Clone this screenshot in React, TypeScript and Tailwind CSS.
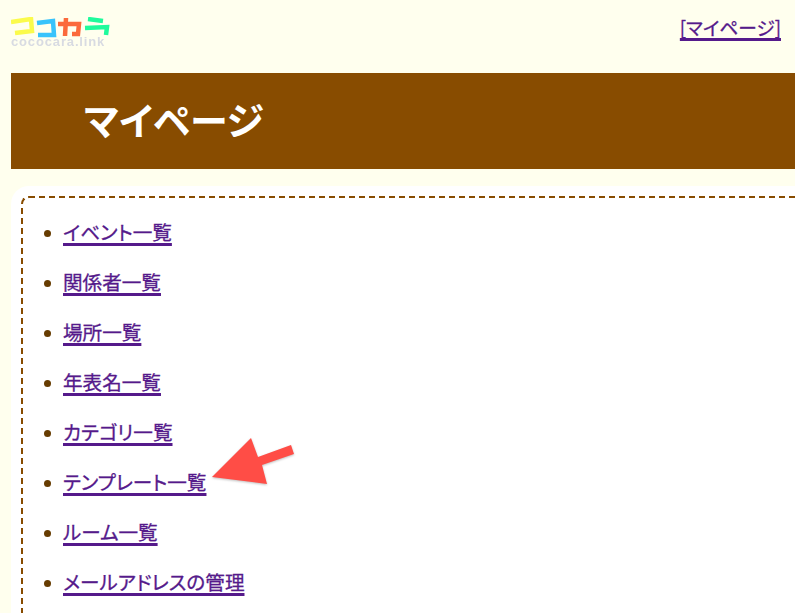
const items = [
  "イベント一覧",
  "関係者一覧",
  "場所一覧",
  "年表名一覧",
  "カテゴリ一覧",
  "テンプレート一覧",
  "ルーム一覧",
  "メールアドレスの管理",
];

function Logo() {
  return (
    <div className="relative h-[30px] w-[100px]">
      <svg width="100" height="21" viewBox="0 0 100 21" className="block blur-[0.5px]" fill="none" strokeWidth="4.5">
        <path d="M0 5 L20 2 L21 14 L4 16" stroke="#fbfb4b" />
        <path d="M26 6 L42 4 L43 18 L27 18" stroke="#38c3fb" />
        <path d="M47 7 L68 7 L67 17 L61 17 M55 1 L54 19" stroke="#fb6a3c" />
        <path d="M77 2 L92 4 M74 11 L96 10 L95 18" stroke="#1ffb9c" />
      </svg>
      <span className="absolute left-0 top-[20px] whitespace-nowrap font-['Liberation_Sans',sans-serif] text-[13px] font-bold leading-[9px] tracking-[0.85px] text-[#d8dbe2] blur-[0.5px]">
        cococara.link
      </span>
    </div>
  );
}

function Arrow() {
  return (
    <svg width="96" height="60" viewBox="0 0 96 60" className="absolute left-[206px] top-[434px] drop-shadow-[0_1px_1px_rgba(0,0,0,0.25)]">
      <path d="M6 43 L45 4 L52 23 L85 11 L88 20 L56 31 L61 50 Z" fill="#ff4d46" />
    </svg>
  );
}

export default function App() {
  return (
    <div className="relative h-[613px] w-[795px] overflow-hidden bg-[#ffffee] pl-[11px] font-['Noto_Sans_CJK_JP','Liberation_Sans',sans-serif] text-[#663c00] [font-feature-settings:'palt']">
      <header className="flex h-[73px] items-start justify-between pr-[14px]">
        <div className="pt-[17px]">
          <Logo />
        </div>
        <a href="#" className="mt-[13px] text-[18.7px] leading-[28px] text-[#551a8b] underline decoration-[2.5px] underline-offset-[3px] [-webkit-text-stroke:0.3px_#551a8b]">
          [マイページ]
        </a>
      </header>
      <h1 className="flex h-[96px] items-center bg-[#884c00] pb-[5px] pl-[73px] text-[38px] font-bold text-white">
        マイページ
      </h1>
      <main className="mt-[17px] h-[500px] rounded-tl-[18px] bg-white pl-[10px] pt-[10px]">
        <div className="h-full rounded-tl-[8px] border-l-2 border-t-2 border-dashed border-[#884c00]">
          <ul className="flex flex-col gap-[20px] pl-[21px] pt-[19px]">
            {items.map((item) => (
              <li key={item} className="flex h-[30px] items-center gap-[12px] text-[19.6px] leading-[30px]">
                <span className="mt-[2px] size-[7px] rounded-full bg-[#663c00]" />
                <a href="#" className="text-[#551a8b] underline decoration-[2.5px] underline-offset-[3px] [-webkit-text-stroke:0.3px_#551a8b]">
                  {item}
                </a>
              </li>
            ))}
          </ul>
        </div>
      </main>
      <Arrow />
    </div>
  );
}
